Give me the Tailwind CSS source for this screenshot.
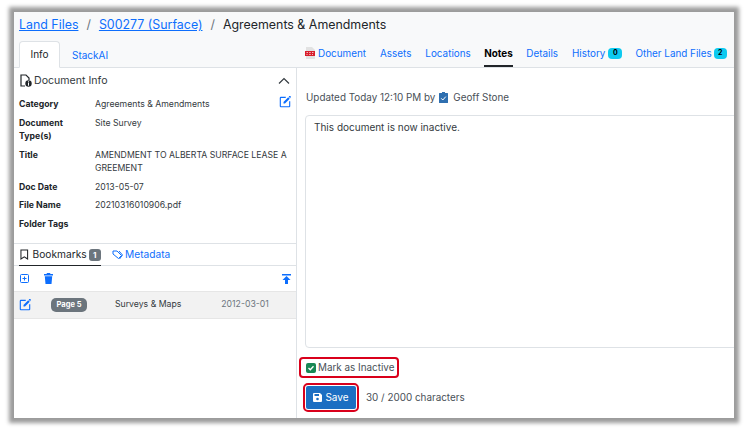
<!DOCTYPE html>
<html>
<head>
<meta charset="utf-8">
<script src="https://cdn.jsdelivr.net/npm/@tailwindcss/browser@4"></script>
</head>
<body class="bg-white overflow-hidden font-['Inter',sans-serif]">
<div class="w-[748px] h-[430px] pl-[14px] pt-[12px] overflow-hidden">
  <div class="w-[720px] h-[406px] bg-white shadow-[0_0_4px_5px_#9c9c9c] flex flex-col overflow-hidden text-[#212529]">
    <div class="h-[56px] bg-[#f8f9fa] border-b border-[#dee2e6] flex flex-col shrink-0 relative">
      <div class="h-[26px] pl-[5px] flex items-center text-[12.4px] whitespace-nowrap">
        <a class="text-[#0d6efd] underline">Land Files</a>
        <span class="text-[#6c757d] mx-[8px]">/</span>
        <a class="text-[#0d6efd] underline">S00277 (Surface)</a>
        <span class="text-[#6c757d] mx-[8px]">/</span>
        <span>Agreements &amp; Amendments</span>
      </div>
      <div class="flex flex-1 items-end">
        <div class="w-[283px] flex pl-[5px] items-end text-[10px] h-[26px] -mb-px">
          <div class="w-[41px] h-[27px] bg-white border border-[#dee2e6] border-b-white rounded-t-[4px] flex items-center justify-center">Info</div>
          <div class="ml-[12px] h-[26px] flex items-center justify-center text-[#0d6efd]">StackAI</div>
        </div>
        <div class="flex-1 flex items-center text-[9.9px] text-[#0d6efd] pl-[8px] pb-[2px] whitespace-nowrap h-[26px]">
          <svg class="w-[11px] h-[12px] mr-[2px]" viewBox="0 0 11 12"><path d="M1 0h6l3 3v9H1z" fill="#e2e2e2"/><rect x="0" y="4" width="10" height="5" fill="#d81e2c"/><path d="M1.500 5.500h1.500M4.200 5.500h1.500M7 5.500h1.500M1.500 7.500h1M4.200 7.500h1.500M7 7.500h1" stroke="#fff" stroke-width=".7"/></svg>
          <span>Document</span>
          <span class="ml-[14px]">Assets</span>
          <span class="ml-[14px]">Locations</span>
          <span class="ml-[13.5px] h-[26px] -mb-[2px] flex items-center font-bold text-black border-b-2 border-[#212529]">Notes</span>
          <span class="ml-[13.5px]">Details</span>
          <span class="ml-[14px]">History</span>
          <span class="ml-[3px] w-[14px] h-[11px] rounded-[4px] bg-[#0dcaf0] text-black text-[7px] font-bold flex items-center justify-center">0</span>
          <span class="ml-[13px]">Other Land Files</span>
          <span class="ml-[2px] w-[13px] h-[11px] rounded-[4px] bg-[#0dcaf0] text-black text-[7px] font-bold flex items-center justify-center">2</span>
        </div>
      </div>
    </div>
    <div class="flex flex-1 min-h-0">
      <div class="w-[283px] shrink-0 border-r border-[#dee2e6] flex flex-col">
        <div class="h-[175px] shrink-0 px-[5px] text-[8.7px] leading-[13.5px]">
          <div class="h-[25px] flex items-center text-[10.6px] text-[#343a40]">
            <svg class="w-[13px] h-[13px] mr-[2px]" viewBox="0 0 13 13" fill="none"><path d="M6 12H2V1h5l3 3v2" stroke="#212529" stroke-width="1.2"/><circle cx="9.500" cy="9.500" r="3.200" fill="#212529"/><rect x="9" y="8.700" width="1" height="3" fill="#fff"/><rect x="9" y="7.300" width="1" height="1" fill="#fff"/></svg>
            <span>Document Info</span>
            <svg class="ml-auto mr-[1px] w-[12px] h-[8px]" viewBox="0 0 12 8" fill="none"><path d="M1 6.500l5-5 5 5" stroke="#343a40" stroke-width="1.200"/></svg>
          </div>
          <div class="grid grid-cols-[76px_1fr] gap-y-[5px] mt-[5px]">
            <div class="font-bold">Category</div>
            <div class="flex justify-between text-[#343a40]"><span>Agreements &amp; Amendments</span>
              <svg class="w-[12px] h-[12px] -mt-[2px]" viewBox="0 0 16 16" fill="#0d6efd"><path d="M15.500 1.600a1 1 0 0 0 0-1.200L15 .1a1 1 0 0 0-1.300 0L13 1l2 2zM12.300 1.700 6 8v2h2l6.300-6.300z"/><path d="M1 2.500A1.500 1.500 0 0 1 2.500 1H9v1.500H2.500v11h11V7H15v6.500a1.500 1.500 0 0 1-1.500 1.500h-11A1.500 1.500 0 0 1 1 13.500z"/></svg>
            </div>
            <div class="font-bold">Document<br>Type(s)</div>
            <div class="text-[#343a40]">Site Survey</div>
            <div class="font-bold">Title</div>
            <div class="text-[#343a40] whitespace-nowrap">AMENDMENT TO ALBERTA SURFACE LEASE A<br>GREEMENT</div>
            <div class="font-bold">Doc Date</div>
            <div class="text-[#343a40]">2013-05-07</div>
            <div class="font-bold">File Name</div>
            <div class="text-[#343a40]">20210316010906.pdf</div>
            <div class="font-bold">Folder Tags</div>
            <div></div>
          </div>
        </div>
        <div class="h-[23px] shrink-0 border-t border-b border-[#dee2e6] px-[5px] flex items-end text-[10.2px]">
          <div class="h-[22px] -mb-px flex items-center border-b border-[#212529] w-[82px]">
            <svg class="w-[9px] h-[11px] mr-[4px] ml-px" viewBox="0 0 9 11" fill="none"><path d="M1 .7h7v9.500L4.500 8 1 10.200z" stroke="#212529" stroke-width="1.100"/></svg>
            <span>Bookmarks</span>
            <span class="ml-[2px] w-[13px] h-[12px] rounded-[3px] bg-[#6c757d] text-white text-[8px] font-bold flex items-center justify-center">1</span>
          </div>
          <div class="h-[21px] flex items-center text-[#0d6efd] ml-[11px]">
            <svg class="w-[11px] h-[10px] mr-[2px]" viewBox="0 0 11 10" fill="none"><path d="M1 1h4l4.500 4.500-3 3L1 4z M7 1l3.500 4L7.500 9" stroke="#0d6efd" stroke-width="1"/></svg>
            <span>Metadata</span>
          </div>
        </div>
        <div class="h-[25px] shrink-0 flex items-center px-[6px]">
          <svg class="w-[9px] h-[9px]" viewBox="0 0 9 9" fill="none"><rect x=".5" y=".5" width="8" height="8" rx="1" stroke="#0d6efd"/><path d="M4.500 2.500v4M2.500 4.500h4" stroke="#0d6efd"/></svg>
          <svg class="w-[9px] h-[11px] ml-[15px]" viewBox="0 0 9 11" fill="#0d6efd"><path d="M3 0h3l.5 1H9v1.500H0V1h2.500zM.8 3.300h7.400L7.500 11h-6z"/></svg>
          <svg class="w-[9px] h-[10px] ml-auto mr-[-1px]" viewBox="0 0 9 10" fill="#0d6efd"><rect x="0" y="0" width="9" height="1.500"/><path d="M4.500 2 8.500 6H6v4H3V6H.5z"/></svg>
        </div>
        <div class="h-[28px] shrink-0 bg-[#f2f2f2] border-t border-b border-[#e6e6e6] flex items-center text-[8.7px]">
          <svg class="w-[12px] h-[12px] ml-[5px]" viewBox="0 0 16 16" fill="#0d6efd"><path d="M15.500 1.600a1 1 0 0 0 0-1.200L15 .1a1 1 0 0 0-1.300 0L13 1l2 2zM12.300 1.700 6 8v2h2l6.300-6.300z"/><path d="M1 2.500A1.500 1.500 0 0 1 2.500 1H9v1.500H2.500v11h11V7H15v6.500a1.500 1.500 0 0 1-1.500 1.500h-11A1.500 1.500 0 0 1 1 13.500z"/></svg>
          <span class="ml-[20px] w-[36px] h-[14px] rounded-[5px] bg-[#6c757d] text-white text-[7.500px] font-bold flex items-center justify-center">Page 5</span>
          <span class="ml-[28px] text-[#343a40]">Surveys &amp; Maps</span>
          <span class="ml-[40px] text-[#6c757d]">2012-03-01</span>
        </div>
        <div class="flex-1"></div>
      </div>
      <div class="flex-1 min-w-0 pl-[8px] flex flex-col">
        <div class="h-[26px] mt-[16px] flex items-center text-[9.9px] text-[#495057] whitespace-nowrap">
          <span class="pl-px">Updated Today 12:10 PM by</span>
          <svg class="w-[9px] h-[11px] ml-[4px] mr-[5px]" viewBox="0 0 9 11"><path d="M3 0h3v1h2.500a.5.5 0 0 1 .5.5V10.500a.5.5 0 0 1-.5.5h-8a.5.5 0 0 1-.5-.5V1.500A.5.5 0 0 1 .5 1H3z" fill="#2f6fb0"/><path d="M2.200 6.300 3.800 8 6.800 4.600" stroke="#fff" fill="none"/></svg>
          <span>Geoff Stone</span>
        </div>
        <div class="h-[233px] mt-[5px] -mr-[6px] shrink-0 border border-[#dee2e6] rounded-[4px] px-[8px] pt-[4px] text-[10px] leading-[15px] text-[#343a40]">This document is now inactive.</div>
        <div class="mt-[9px] self-start -ml-[6px] h-[21px] pl-[5px] pr-[3px] border-2 border-[#d9001b] rounded-[4px] flex items-center text-[9.9px] text-[#495057] whitespace-nowrap">
          <span class="w-[10px] h-[10px] rounded-[2px] bg-[#198754] flex items-center justify-center mr-[2px]"><svg class="w-[8px] h-[8px]" viewBox="0 0 8 8" fill="none"><path d="M1.500 4 3.300 5.800 6.500 2.300" stroke="#fff" stroke-width="1.300"/></svg></span>
          Mark as Inactive
        </div>
        <div class="mt-[5px] flex items-center text-[9.9px] text-[#495057] whitespace-nowrap">
          <div class="-ml-[2px] p-px border-2 border-[#d9001b] rounded-[5px]">
            <div class="w-[50px] h-[23px] bg-[#1b6ec2] rounded-[2px] text-white flex items-center justify-center text-[10px]">
              <svg class="w-[9px] h-[9px] mr-[3px]" viewBox="0 0 9 9" fill="#fff"><path d="M1 0h6l2 2v6a1 1 0 0 1-1 1H1a1 1 0 0 1-1-1V1a1 1 0 0 1 1-1z"/><rect x="1.500" y="1" width="4.500" height="2" fill="#1b6ec2"/><circle cx="4.500" cy="6" r="1.300" fill="#1b6ec2"/></svg>
              Save
            </div>
          </div>
          <span class="ml-[7px]">30 / 2000 characters</span>
        </div>
      </div>
    </div>
  </div>
</div>
</body>
</html>
